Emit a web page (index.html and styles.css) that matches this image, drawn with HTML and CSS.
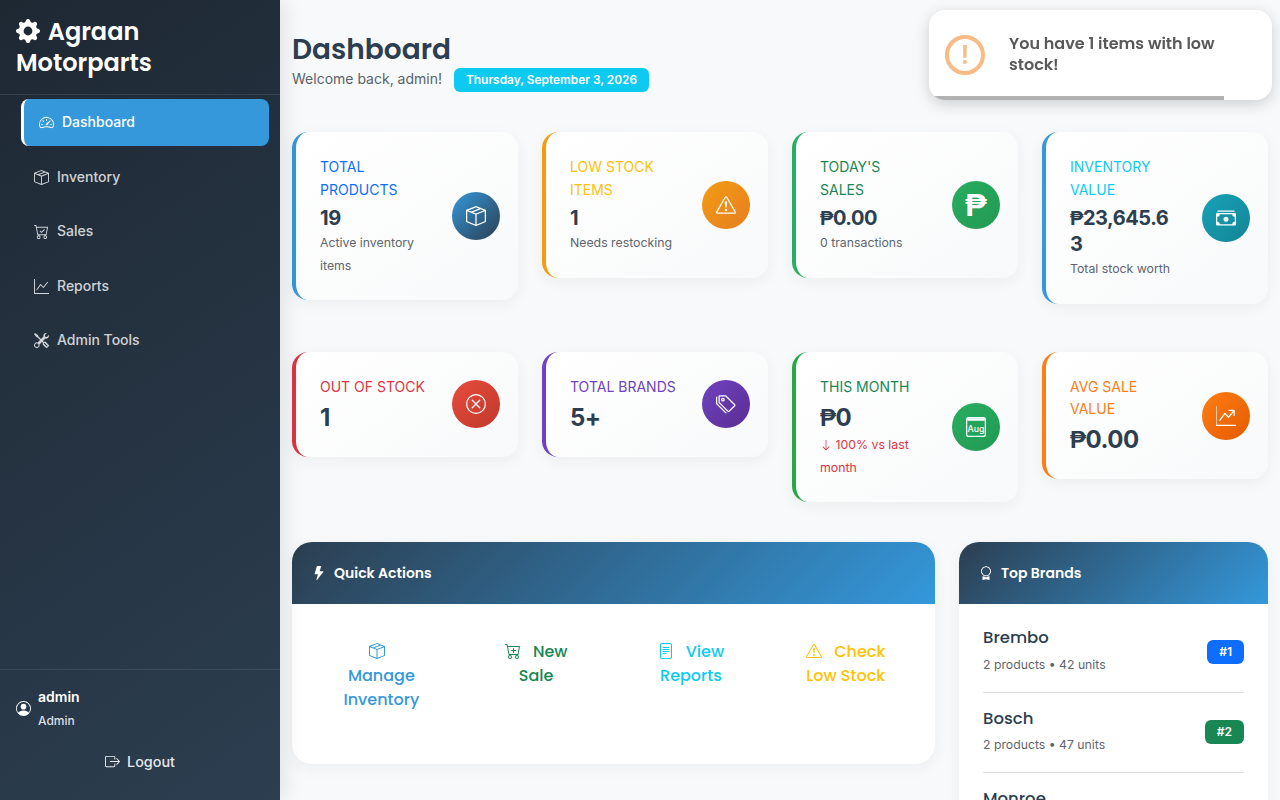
FILE: index.html
```html
<!DOCTYPE html>
<html lang="en">
<head>
<meta charset="utf-8">
<title>Dashboard - Agraan Motorparts</title>
<link rel="stylesheet" href="styles.css">
</head>
<body>
<svg class="sprite" xmlns="http://www.w3.org/2000/svg" aria-hidden="true">
<symbol id="i-gear" viewBox="0 0 16 16"><path d="M9.405 1.05c-.413-1.4-2.397-1.4-2.81 0l-.1.34a1.464 1.464 0 0 1-2.105.872l-.31-.17c-1.283-.698-2.686.705-1.987 1.987l.169.311c.446.82.023 1.841-.872 2.105l-.34.1c-1.4.413-1.4 2.397 0 2.81l.34.1a1.464 1.464 0 0 1 .872 2.105l-.17.31c-.698 1.283.705 2.686 1.987 1.987l.311-.169a1.464 1.464 0 0 1 2.105.872l.1.34c.413 1.4 2.397 1.4 2.81 0l.1-.34a1.464 1.464 0 0 1 2.105-.872l.31.17c1.283.698 2.686-.705 1.987-1.987l-.169-.311a1.464 1.464 0 0 1 .872-2.105l.34-.1c1.4-.413 1.4-2.397 0-2.81l-.34-.1a1.464 1.464 0 0 1-.872-2.105l.17-.31c.698-1.283-.705-2.686-1.987-1.987l-.311.169a1.464 1.464 0 0 1-2.105-.872zM8 10.93a2.929 2.929 0 1 1 0-5.86 2.929 2.929 0 0 1 0 5.858z"/></symbol>
<symbol id="i-speed" viewBox="0 0 16 16"><path d="M8 4a.5.5 0 0 1 .5.5V6a.5.5 0 0 1-1 0V4.5A.5.5 0 0 1 8 4M3.732 5.732a.5.5 0 0 1 .707 0l.915.914a.5.5 0 1 1-.708.708l-.914-.915a.5.5 0 0 1 0-.707M2 10a.5.5 0 0 1 .5-.5h1.586a.5.5 0 0 1 0 1H2.5A.5.5 0 0 1 2 10m9.5 0a.5.5 0 0 1 .5-.5h1.5a.5.5 0 0 1 0 1H12a.5.5 0 0 1-.5-.5m.754-4.246a.39.39 0 0 0-.527-.02L7.547 9.31a.91.91 0 1 0 1.302 1.258l3.434-4.297a.39.39 0 0 0-.029-.518z"/><path fill-rule="evenodd" d="M0 10a8 8 0 1 1 15.547 2.661c-.442 1.253-1.845 1.602-2.932 1.25C11.309 13.488 9.475 13 8 13c-1.474 0-3.31.488-4.615.911-1.087.352-2.49.003-2.932-1.25A8 8 0 0 1 0 10m8-7a7 7 0 0 0-6.603 9.329c.203.575.923.876 1.68.63C4.397 12.533 6.358 12 8 12s3.604.532 4.923.96c.757.245 1.477-.056 1.68-.631A7 7 0 0 0 8 3"/></symbol>
<symbol id="i-box" viewBox="0 0 16 16"><path d="M8.186 1.113a.5.5 0 0 0-.372 0L1.846 3.5l2.404.961L10.404 2zm3.564 1.426L5.596 5 8 5.961 14.154 3.5zm3.25 1.7-6.5 2.6v7.922l6.5-2.6V4.24zM7.5 14.762V6.838L1 4.239v7.925zM7.443.184a1.5 1.5 0 0 1 1.114 0l7.129 2.852A.5.5 0 0 1 16 3.5v8.662a1 1 0 0 1-.629.928l-7.185 2.874a.5.5 0 0 1-.372 0L.63 13.09a1 1 0 0 1-.63-.928V3.5a.5.5 0 0 1 .314-.464z"/></symbol>
<symbol id="i-cart-check" viewBox="0 0 16 16"><path d="M11.354 6.354a.5.5 0 0 0-.708-.708L8 8.293 6.854 7.146a.5.5 0 1 0-.708.708l1.5 1.5a.5.5 0 0 0 .708 0z"/><path fill-rule="evenodd" d="M.5 1a.5.5 0 0 0 0 1h1.11l.401 1.607 1.498 7.985A.5.5 0 0 0 4 12h9a.5.5 0 0 0 .491-.408l1.5-8A.5.5 0 0 0 14.5 3H2.89l-.405-1.621A.5.5 0 0 0 2 1H.5zM3.102 4l1.313 7h8.17l1.313-7H3.102zM5 12a2 2 0 1 0 0 4 2 2 0 0 0 0-4zm7 0a2 2 0 1 0 0 4 2 2 0 0 0 0-4zm-7 1a1 1 0 1 1 0 2 1 1 0 0 1 0-2zm7 0a1 1 0 1 1 0 2 1 1 0 0 1 0-2z"/></symbol>
<symbol id="i-cart-plus" viewBox="0 0 16 16"><path d="M9 5.5a.5.5 0 0 0-1 0V7H6.5a.5.5 0 0 0 0 1H8v1.5a.5.5 0 0 0 1 0V8h1.5a.5.5 0 0 0 0-1H9z"/><path fill-rule="evenodd" d="M.5 1a.5.5 0 0 0 0 1h1.11l.401 1.607 1.498 7.985A.5.5 0 0 0 4 12h9a.5.5 0 0 0 .491-.408l1.5-8A.5.5 0 0 0 14.5 3H2.89l-.405-1.621A.5.5 0 0 0 2 1H.5zM3.102 4l1.313 7h8.17l1.313-7H3.102zM5 12a2 2 0 1 0 0 4 2 2 0 0 0 0-4zm7 0a2 2 0 1 0 0 4 2 2 0 0 0 0-4zm-7 1a1 1 0 1 1 0 2 1 1 0 0 1 0-2zm7 0a1 1 0 1 1 0 2 1 1 0 0 1 0-2z"/></symbol>
<symbol id="i-graph" viewBox="0 0 16 16"><path fill-rule="evenodd" d="M0 0h1v15h15v1H0zm14.817 3.113a.5.5 0 0 1 .07.704l-4.5 5.5a.5.5 0 0 1-.74.037L7.06 6.767l-3.656 5.027a.5.5 0 0 1-.808-.588l4-5.5a.5.5 0 0 1 .758-.06l2.609 2.61 4.15-5.073a.5.5 0 0 1 .704-.07"/></symbol>
<symbol id="i-graph-arrow" viewBox="0 0 16 16"><path fill-rule="evenodd" d="M0 0a.5.5 0 0 1 .5.5V15h15a.5.5 0 0 1 0 1H0V.5A.5.5 0 0 1 0 0zm10 3.5a.5.5 0 0 1 .5-.5h4a.5.5 0 0 1 .5.5v4a.5.5 0 0 1-1 0V4.9l-3.613 4.417a.5.5 0 0 1-.74.037L7.06 6.767l-3.656 5.027a.5.5 0 0 1-.808-.588l4-5.5a.5.5 0 0 1 .758-.06l2.609 2.61L13.445 4H10.5a.5.5 0 0 1-.5-.5z"/></symbol>
<symbol id="i-tools" viewBox="0 0 16 16"><path d="M1 0 0 1l2.2 3.081a1 1 0 0 0 .815.419h.07a1 1 0 0 1 .708.293l2.675 2.675-2.617 2.654A3.003 3.003 0 0 0 0 13a3 3 0 1 0 5.878-.851l2.654-2.617.968.968-.305.914a1 1 0 0 0 .242 1.023l3.27 3.27a.997.997 0 0 0 1.414 0l1.586-1.586a.997.997 0 0 0 0-1.414l-3.27-3.27a1 1 0 0 0-1.023-.242L10.5 9.5l-.96-.96 2.68-2.643A3.005 3.005 0 0 0 16 3c0-.269-.035-.53-.102-.777l-2.14 2.141L12 4l-.364-1.757L13.777.102a3 3 0 0 0-3.675 3.68L7.462 6.46 4.793 3.793a1 1 0 0 1-.293-.707v-.071a1 1 0 0 0-.419-.814zm9.646 10.646a.5.5 0 0 1 .708 0l2.914 2.915a.5.5 0 0 1-.707.707l-2.915-2.914a.5.5 0 0 1 0-.708M3 11l.471.242.529.026.287.445.445.287.026.529L5 13l-.242.471-.026.529-.445.287-.287.445-.529.026L3 15l-.471-.242L2 14.732l-.287-.445L1.268 14l-.026-.529L1 13l.242-.471.026-.529.445-.287.287-.445.529-.026z"/></symbol>
<symbol id="i-person" viewBox="0 0 16 16"><path d="M11 6a3 3 0 1 1-6 0 3 3 0 0 1 6 0"/><path fill-rule="evenodd" d="M0 8a8 8 0 1 1 16 0A8 8 0 0 1 0 8m8-7a7 7 0 0 0-5.468 11.37C3.242 11.226 4.805 10 8 10s4.757 1.225 5.468 2.37A7 7 0 0 0 8 1"/></symbol>
<symbol id="i-logout" viewBox="0 0 16 16"><path fill-rule="evenodd" d="M10 12.5a.5.5 0 0 1-.5.5h-8a.5.5 0 0 1-.5-.5v-9a.5.5 0 0 1 .5-.5h8a.5.5 0 0 1 .5.5v2a.5.5 0 0 0 1 0v-2A1.5 1.5 0 0 0 9.5 2h-8A1.5 1.5 0 0 0 0 3.5v9A1.5 1.5 0 0 0 1.5 14h8a1.5 1.5 0 0 0 1.5-1.5v-2a.5.5 0 0 0-1 0z"/><path fill-rule="evenodd" d="M15.854 8.354a.5.5 0 0 0 0-.708l-3-3a.5.5 0 0 0-.708.708L14.293 7.5H5.5a.5.5 0 0 0 0 1h8.793l-2.147 2.146a.5.5 0 0 0 .708.708z"/></symbol>
<symbol id="i-warn" viewBox="0 0 16 16"><path d="M7.938 2.016A.13.13 0 0 1 8.002 2a.13.13 0 0 1 .063.016.15.15 0 0 1 .054.057l6.857 11.667c.036.06.035.124.002.183a.2.2 0 0 1-.054.06.1.1 0 0 1-.066.017H1.146a.1.1 0 0 1-.066-.017.2.2 0 0 1-.054-.06.18.18 0 0 1 .002-.183L7.884 2.073a.15.15 0 0 1 .054-.057m1.044-.45a1.13 1.13 0 0 0-1.96 0L.165 13.233c-.457.778.091 1.767.98 1.767h13.713c.889 0 1.438-.99.98-1.767z"/><path d="M7.002 12a1 1 0 1 1 2 0 1 1 0 0 1-2 0M7.1 5.995a.905.905 0 1 1 1.8 0l-.35 3.507a.552.552 0 0 1-1.1 0z"/></symbol>
<symbol id="i-x" viewBox="0 0 16 16"><path d="M8 15A7 7 0 1 1 8 1a7 7 0 0 1 0 14m0 1A8 8 0 1 0 8 0a8 8 0 0 0 0 16"/><path d="M4.646 4.646a.5.5 0 0 1 .708 0L8 7.293l2.646-2.647a.5.5 0 0 1 .708.708L8.707 8l2.647 2.646a.5.5 0 0 1-.708.708L8 8.707l-2.646 2.647a.5.5 0 0 1-.708-.708L7.293 8 4.646 5.354a.5.5 0 0 1 0-.708"/></symbol>
<symbol id="i-tags" viewBox="0 0 16 16"><path d="M3 2v4.586l7 7L14.586 9l-7-7zM2 2a1 1 0 0 1 1-1h4.586a1 1 0 0 1 .707.293l7 7a1 1 0 0 1 0 1.414l-4.586 4.586a1 1 0 0 1-1.414 0l-7-7A1 1 0 0 1 2 6.586z"/><path d="M5.5 5a.5.5 0 1 1 0-1 .5.5 0 0 1 0 1m0 1a1.5 1.500 0 1 0 0-3 1.5 1.5 0 0 0 0 3M1 7.086a1 1 0 0 0 .293.707L8.75 15.25l-.043.043a1 1 0 0 1-1.414 0l-7-7A1 1 0 0 1 0 7.586V3a1 1 0 0 1 1-1z"/></symbol>
<symbol id="i-cash" viewBox="0 0 16 16"><path d="M1 3a1 1 0 0 1 1-1h12a1 1 0 0 1 1 1zm7 8a2 2 0 1 0 0-4 2 2 0 0 0 0 4"/><path fill-rule="evenodd" d="M0 5a1 1 0 0 1 1-1h14a1 1 0 0 1 1 1v8a1 1 0 0 1-1 1H1a1 1 0 0 1-1-1zm3 0a2 2 0 0 1-2 2v4a2 2 0 0 1 2 2h10a2 2 0 0 1 2-2V7a2 2 0 0 1-2-2z"/></symbol>
<symbol id="i-bolt" viewBox="0 0 16 16"><path d="M5.52.359A.5.5 0 0 1 6 0h4a.5.5 0 0 1 .474.658L8.694 6H12.5a.5.5 0 0 1 .395.807l-7 9a.5.5 0 0 1-.873-.454L6.823 9.5H3.5a.5.5 0 0 1-.48-.641z"/></symbol>
<symbol id="i-award" viewBox="0 0 16 16"><path d="M9.669.864 8 0 6.331.864l-1.858.282-.842 1.68-1.337 1.32L2.6 6l-.306 1.854 1.337 1.32.842 1.68 1.858.282L8 12l1.669-.864 1.858-.282.842-1.68 1.337-1.32L13.4 6l.306-1.854-1.337-1.32-.842-1.68zm1.196 1.193.684 1.365 1.086 1.072L12.387 6l.248 1.506-1.086 1.072-.684 1.365-1.51.229L8 10.874l-1.355-.702-1.51-.229-.684-1.365-1.086-1.072L3.614 6l-.25-1.506 1.087-1.072.684-1.365 1.51-.229L8 1.126l1.356.702z"/><path d="M4 11.794V16l4-1 4 1v-4.206l-2.018.306L8 13.126 6.018 12.1z"/></symbol>
<symbol id="i-file" viewBox="0 0 16 16"><path d="M5 4a.5.5 0 0 0 0 1h6a.5.5 0 0 0 0-1zm-.5 2.5A.5.5 0 0 1 5 6h6a.5.5 0 0 1 0 1H5a.5.5 0 0 1-.5-.5M5 8a.5.5 0 0 0 0 1h6a.5.5 0 0 0 0-1zm0 2a.5.5 0 0 0 0 1h3a.5.5 0 0 0 0-1z"/><path fill-rule="evenodd" d="M2 2a2 2 0 0 1 2-2h8a2 2 0 0 1 2 2v12a2 2 0 0 1-2 2H4a2 2 0 0 1-2-2zm10-1H4a1 1 0 0 0-1 1v12a1 1 0 0 0 1 1h8a1 1 0 0 0 1-1V2a1 1 0 0 0-1-1"/></symbol>
<symbol id="i-down" viewBox="0 0 16 16"><path fill-rule="evenodd" d="M8 1a.5.5 0 0 1 .5.5v11.793l3.146-3.147a.5.5 0 0 1 .708.708l-4 4a.5.5 0 0 1-.708 0l-4-4a.5.5 0 0 1 .708-.708L7.500 13.293V1.500A.5.5 0 0 1 8 1"/></symbol>
</svg>

<div class="app">
  <aside class="sidebar">
    <div class="brand">
      <h1 class="brand-title"><svg class="ic brand-ic"><use href="#i-gear"/></svg> Agraan Motorparts</h1>
    </div>
    <nav class="nav">
      <a class="nav-link is-active" href="#"><svg class="ic"><use href="#i-speed"/></svg>Dashboard</a>
      <a class="nav-link" href="#"><svg class="ic"><use href="#i-box"/></svg>Inventory</a>
      <a class="nav-link" href="#"><svg class="ic"><use href="#i-cart-check"/></svg>Sales</a>
      <a class="nav-link" href="#"><svg class="ic"><use href="#i-graph"/></svg>Reports</a>
      <a class="nav-link" href="#"><svg class="ic"><use href="#i-tools"/></svg>Admin Tools</a>
    </nav>
    <div class="user">
      <div class="user-row">
        <svg class="ic user-ic"><use href="#i-person"/></svg>
        <div>
          <div class="user-name">admin</div>
          <div class="user-role">Admin</div>
        </div>
      </div>
      <a class="logout" href="#"><svg class="ic"><use href="#i-logout"/></svg>Logout</a>
    </div>
  </aside>

  <main class="main">
    <header class="page-head">
      <h2 class="page-title">Dashboard</h2>
      <div class="page-sub"><span class="welcome">Welcome back, admin!</span><span class="date-badge">Thursday, September 3, 2026</span></div>
    </header>

    <section class="stats stats-a">
      <article class="stat b-blue">
        <div class="stat-text">
          <div class="stat-label t-primary">Total Products</div>
          <div class="stat-value">19</div>
          <div class="stat-note">Active inventory items</div>
        </div>
        <div class="stat-icon g-navy"><svg class="ic"><use href="#i-box"/></svg></div>
      </article>
      <article class="stat b-amber">
        <div class="stat-text">
          <div class="stat-label t-warning">Low Stock Items</div>
          <div class="stat-value">1</div>
          <div class="stat-note">Needs restocking</div>
        </div>
        <div class="stat-icon g-amber"><svg class="ic"><use href="#i-warn"/></svg></div>
      </article>
      <article class="stat b-green">
        <div class="stat-text">
          <div class="stat-label t-success">Today's Sales</div>
          <div class="stat-value"><span class="cur">₱</span>0.00</div>
          <div class="stat-note">0 transactions</div>
        </div>
        <div class="stat-icon g-green"><span class="peso">₱</span></div>
      </article>
      <article class="stat b-blue">
        <div class="stat-text">
          <div class="stat-label t-info">Inventory Value</div>
          <div class="stat-value"><span class="cur">₱</span>23,645.63</div>
          <div class="stat-note">Total stock worth</div>
        </div>
        <div class="stat-icon g-teal"><svg class="ic"><use href="#i-cash"/></svg></div>
      </article>
    </section>

    <section class="stats stats-b">
      <article class="stat b-red">
        <div class="stat-text">
          <div class="stat-label t-danger">Out of Stock</div>
          <div class="stat-value">1</div>
        </div>
        <div class="stat-icon g-red"><svg class="ic"><use href="#i-x"/></svg></div>
      </article>
      <article class="stat b-purple">
        <div class="stat-text">
          <div class="stat-label t-purple">Total Brands</div>
          <div class="stat-value">5+</div>
        </div>
        <div class="stat-icon g-purple"><svg class="ic"><use href="#i-tags"/></svg></div>
      </article>
      <article class="stat b-green2">
        <div class="stat-text">
          <div class="stat-label t-success">This Month</div>
          <div class="stat-value"><span class="cur">₱</span>0</div>
          <div class="stat-note t-danger"><svg class="ic arrow"><use href="#i-down"/></svg> 100% vs last month</div>
        </div>
        <div class="stat-icon g-green">
          <svg class="ic" viewBox="0 0 16 16"><rect x=".5" y=".5" width="15" height="15" rx="1.5" fill="none" stroke="currentColor"/><rect x="1" y="1" width="14" height="2" fill="currentColor"/><text class="cal-text" x="8" y="11.800" text-anchor="middle">Aug</text></svg>
        </div>
      </article>
      <article class="stat b-orange">
        <div class="stat-text">
          <div class="stat-label t-orange">Avg Sale Value</div>
          <div class="stat-value"><span class="cur">₱</span>0.00</div>
        </div>
        <div class="stat-icon g-orange"><svg class="ic"><use href="#i-graph-arrow"/></svg></div>
      </article>
    </section>

    <section class="panels">
      <div class="panel">
        <div class="panel-head"><svg class="ic"><use href="#i-bolt"/></svg>Quick Actions</div>
        <div class="actions">
          <a class="action t-blue" href="#"><svg class="ic"><use href="#i-box"/></svg> Manage Inventory</a>
          <a class="action t-success" href="#"><svg class="ic"><use href="#i-cart-plus"/></svg> New Sale</a>
          <a class="action t-info" href="#"><svg class="ic"><use href="#i-file"/></svg> View Reports</a>
          <a class="action t-warning" href="#"><svg class="ic"><use href="#i-warn"/></svg> Check Low Stock</a>
        </div>
      </div>
      <div class="panel">
        <div class="panel-head"><svg class="ic"><use href="#i-award"/></svg>Top Brands</div>
        <div class="brands">
          <div class="brand-row">
            <div class="brand-info"><div class="brand-name">Brembo</div><div class="brand-meta">2 products • 42 units</div></div>
            <span class="rank r-blue">#1</span>
          </div>
          <div class="brand-row">
            <div class="brand-info"><div class="brand-name">Bosch</div><div class="brand-meta">2 products • 47 units</div></div>
            <span class="rank r-green">#2</span>
          </div>
          <div class="brand-row">
            <div class="brand-info"><div class="brand-name">Monroe</div><div class="brand-meta">2 products • 30 units</div></div>
            <span class="rank r-teal">#3</span>
          </div>
        </div>
      </div>
    </section>
  </main>
</div>

<div class="toast" role="alert">
  <div class="toast-icon">!</div>
  <div class="toast-text">You have 1 items with low stock!</div>
  <div class="toast-bar"></div>
</div>
</body>
</html>
```

FILE: styles.css
```css
* { box-sizing: border-box; }
html, body { margin: 0; height: 100%; overflow: hidden; }
body {
  font-family: Inter, "Liberation Sans", sans-serif;
  font-size: 16px;
  line-height: 1.6;
  color: #2c3e50;
  background: #f8f9fa;
}
a { text-decoration: none; color: inherit; }
.sprite { position: absolute; width: 0; height: 0; overflow: hidden; }
.ic { width: 1em; height: 1em; fill: currentColor; flex: none; }

.app { display: flex; height: 800px; overflow: hidden; }

.sidebar {
  position: relative;
  z-index: 2;
  width: 280px;
  flex: none;
  height: 800px;
  display: flex;
  flex-direction: column;
  color: #fff;
  background: linear-gradient(145deg, #1e2833, #2c3e50);
  box-shadow: 4px 0 20px rgba(0, 0, 0, .1);
}
.brand { height: 95px; padding: 16px; border-bottom: 1px solid rgba(255, 255, 255, .1); }
.brand-title { margin: 0; font: 600 24px/31px Poppins, Inter, sans-serif; }
.brand-ic { width: 24px; height: 24px; vertical-align: -3px; margin-right: 2px; }

.nav { display: flex; flex-direction: column; gap: 7.5px; padding: 4px 11px 0 16px; flex: 1; }
.nav-link {
  display: flex;
  align-items: center;
  gap: 8px;
  height: 47px;
  padding: 0 18px;
  border-radius: 8px;
  font-size: 14px;
  font-weight: 500;
  color: rgba(255, 255, 255, .8);
}
.nav-link .ic { width: 15px; height: 15px; }
.nav-link.is-active {
  margin-left: 5px;
  padding-left: 15px;
  color: #fff;
  background: #3498db;
  border-left: 3px solid #fff;
}

.user { height: 131px; padding: 15px 16px 16px; border-top: 1px solid rgba(255, 255, 255, .1); }
.user-row { display: flex; align-items: center; gap: 7px; }
.user-ic { width: 15px; height: 15px; }
.user-name { font-size: 14px; font-weight: 600; line-height: 23px; }
.user-role { font-size: 12px; font-weight: 500; line-height: 23px; margin-top: 1px; color: rgba(255, 255, 255, .85); }
.logout {
  display: flex;
  justify-content: center;
  align-items: center;
  gap: 7px;
  margin-top: 18px;
  font-size: 14.4px;
  font-weight: 500;
  color: rgba(255, 255, 255, .9);
}
.logout .ic { width: 15px; height: 15px; }

.main { flex: 1; min-width: 0; padding: 33px 12px 0; }
.page-head { height: 99px; }
.page-title { margin: 0; font: 600 28px/34px Poppins, Inter, sans-serif; color: #2c3e50; }
.page-sub { display: flex; align-items: flex-start; gap: 12px; font-size: 14px; color: #5a6268; line-height: 24px; margin-top: 1px; }
.welcome { line-height: 22px; }
.date-badge {
  width: 195px;
  height: 24px;
  text-align: center;
  line-height: 24px;
  font-size: 11.9px;
  font-weight: 600;
  color: #fff;
  background: #0dcaf0;
  border-radius: 6px;
}

.stats { display: grid; grid-template-columns: repeat(4, 1fr); gap: 24px; align-items: start; }
.stats-a { margin-bottom: 48px; }
.stats-b { margin-bottom: 40px; }

.stat {
  display: flex;
  align-items: center;
  padding: 24px 18px 24px 24px;
  border-left: 4px solid;
  border-radius: 16px;
  background: linear-gradient(145deg, #fff, #f8f9fa);
  box-shadow: 0 4px 15px rgba(0, 0, 0, .05);
}
.stat-text { flex: 1; min-width: 0; margin-right: 24px; overflow-wrap: anywhere; }
.stat-label { font-size: 14px; line-height: 23px; text-transform: uppercase; }
.stat-value { font-size: 20px; font-weight: 700; line-height: 26px; color: #2c3e50; margin-top: 3.4px; }
.cur { font-family: "Liberation Sans", sans-serif; }
.stat-note { font-size: 12.3px; line-height: 22.4px; color: #5f666d; }
.stats-a .stat-text { margin-bottom: -1px; }
.stats-a .stat-label { margin-top: -1px; }
.stats-a .stat-value { margin: 4.4px 0 1px; letter-spacing: -.45px; }
.stats-b .stat-label { line-height: 22.4px; }
.stats-b .stat-value { font-size: 24px; line-height: 31.2px; letter-spacing: -.5px; }
.stats-b .stat-note { line-height: 23px; margin-bottom: -1px; }
.arrow { width: 12px; height: 12px; vertical-align: -2px; }

.stat-icon {
  width: 48px;
  height: 48px;
  flex: none;
  border-radius: 50%;
  display: flex;
  align-items: center;
  justify-content: center;
  color: #fff;
  font-size: 20px;
}
.peso { font: 700 32px/1 "Liberation Sans", sans-serif; }
.cal-text { font: 500 7px Inter, sans-serif; fill: currentColor; }

.b-blue { border-color: #3498db; }
.b-amber { border-color: #f39c12; }
.b-green { border-color: #27ae60; }
.b-green2 { border-color: #28a745; }
.b-red { border-color: #dc3545; }
.b-purple { border-color: #6f42c1; }
.b-orange { border-color: #fd7e14; }

.t-primary { color: #0d6efd; }
.t-warning { color: #ffc107; }
.t-success { color: #198754; }
.t-info { color: #0dcaf0; }
.t-danger { color: #dc3545; }
.t-purple { color: #6f42c1; }
.t-orange { color: #fd7e14; }
.t-blue { color: #3498db; }

.g-navy { background: linear-gradient(135deg, #3498db, #2c3e50); }
.g-amber { background: linear-gradient(135deg, #f39c12, #e67e22); }
.g-green { background: linear-gradient(135deg, #27ae60, #229954); }
.g-teal { background: linear-gradient(135deg, #17a2b8, #138496); }
.g-red { background: linear-gradient(135deg, #e74c3c, #c0392b); }
.g-purple { background: linear-gradient(135deg, #6f42c1, #5a2d91); }
.g-orange { background: linear-gradient(135deg, #fd7e14, #e55a00); }

.panels { display: grid; grid-template-columns: 643fr 309fr; gap: 24px; align-items: start; }
.panel { background: #fff; border-radius: 20px; overflow: hidden; box-shadow: 0 4px 15px rgba(0, 0, 0, .05); }
.panel-head {
  height: 62px;
  display: flex;
  align-items: center;
  gap: 8px;
  padding: 1px 20px 0;
  font: 600 14px/1.6 Poppins, Inter, sans-serif;
  color: #fff;
  background: linear-gradient(135deg, #2c3e50, #3498db);
}
.panel-head .ic { width: 14px; height: 14px; }

.actions { display: grid; grid-template-columns: repeat(4, 1fr); padding: 36px 12px 52px; }
.action {
  display: block;
  text-align: center;
  padding: 0 32px;
  font: 500 16px/24px Poppins, Inter, sans-serif;
}
.action .ic { width: 16px; height: 16px; margin-right: 8px; vertical-align: -2px; }

.brands { padding: 9px 24px 0; }
.brand-row {
  display: flex;
  justify-content: space-between;
  align-items: center;
  height: 80px;
  border-bottom: 1px solid #dee2e6;
}
.brand-info { margin-bottom: 3.4px; }
.brand-row:first-child .brand-info { margin-bottom: 5px; }
.brand-name { font: 500 16.5px/26px Poppins, Inter, sans-serif; color: #2c3e50; }
.brand-meta { font-size: 12.25px; line-height: 20px; color: #5f666d; margin-top: 3.5px; }
.rank {
  height: 24px;
  padding: 0 12px;
  font-size: 12px;
  font-weight: 600;
  line-height: 24px;
  color: #fff;
  border-radius: 6px;
}
.r-blue { background: #0d6efd; }
.r-green { background: #198754; }
.r-teal { background: #0dcaf0; }

.toast {
  position: fixed;
  z-index: 5;
  top: 10px;
  left: 929px;
  width: 343px;
  height: 90px;
  display: flex;
  align-items: center;
  padding: 0 16px;
  background: #fff;
  border-radius: 16px;
  overflow: hidden;
  box-shadow: 0 4px 15px rgba(0, 0, 0, .18);
}
.toast-icon {
  width: 40px;
  height: 40px;
  flex: none;
  margin-right: 24px;
  border: 4px solid #f8bb86;
  border-radius: 50%;
  display: flex;
  align-items: center;
  justify-content: center;
  font: 600 26px/1 Inter, sans-serif;
  color: #f8bb86;
}
.toast-text { font: 600 16px/21px Poppins, Inter, sans-serif; color: #595959; margin-top: -3px; }
.toast-bar { position: absolute; left: 0; bottom: 0; width: 295px; height: 4px; background: rgba(0, 0, 0, .3); }
```
